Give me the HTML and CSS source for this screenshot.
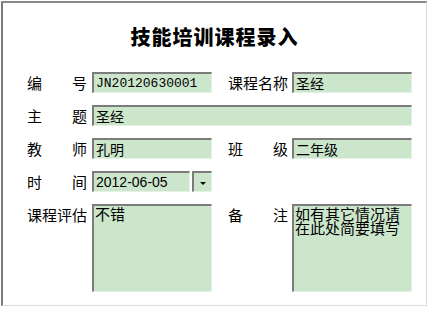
FILE: index.html
```html
<!DOCTYPE html>
<html lang="zh-CN">
<head>
  <meta charset="UTF-8">
  <title>技能培训课程录入</title>
  <link rel="stylesheet" href="styles.css">
</head>
<body>

<div class="frame">
  <h2 class="title">技能培训课程录入</h2>
  <form class="course-form">
    <label class="lbl"><span>编</span><span>号</span></label>
    <div class="cell"><input type="text" class="fld mono" value="JN20120630001"></div>
    <label class="lbl"><span>课</span><span>程</span><span>名</span><span>称</span></label>
    <div class="cell"><input type="text" class="fld" value="圣经"></div>

    <label class="lbl"><span>主</span><span>题</span></label>
    <div class="cell wide"><input type="text" class="fld" value="圣经"></div>

    <label class="lbl"><span>教</span><span>师</span></label>
    <div class="cell"><input type="text" class="fld" value="孔明"></div>
    <label class="lbl"><span>班</span><span>级</span></label>
    <div class="cell"><input type="text" class="fld" value="二年级"></div>

    <label class="lbl"><span>时</span><span>间</span></label>
    <div class="cell date">
      <input type="text" class="fld sans" value="2012-06-05">
      <button type="button" class="drop"><i class="arrow"></i></button>
    </div>
    <div></div>
    <div></div>

    <label class="lbl top"><span>课</span><span>程</span><span>评</span><span>估</span></label>
    <div class="cell"><textarea class="fld area">不错</textarea></div>
    <label class="lbl top"><span>备</span><span>注</span></label>
    <div class="cell"><textarea class="fld area">如有其它情况请在此处简要填写</textarea></div>
  </form>
</div>

</body>
</html>
```

FILE: styles.css
```css
body {
  margin: 0;
  background: #fff;
  font-family: "Noto Sans CJK SC", sans-serif;
  color: #000;
}
.frame {
  box-sizing: border-box;
  width: 426px;
  height: 305px;
  margin: 1px 0 0 1px;
  border-style: solid;
  border-width: 2px 1px 1px 2px;
  border-color: #8a8a8a #dcdcdc #dcdcdc #7a7a7a;
  background: #fff;
}
.title {
  margin: 24px 0 0;
  font-size: 20px;
  line-height: 20px;
  font-weight: 900;
  letter-spacing: 1px;
  text-align: center;
}
.course-form {
  display: grid;
  grid-template-columns: 65px 136px 64px 120px;
  grid-auto-rows: 21px;
  row-gap: 12px;
  margin-top: 25px;
  padding-left: 24px;
}
.lbl {
  display: flex;
  justify-content: space-between;
  align-items: center;
  width: 60px;
  font-size: 15px;
  line-height: 21px;
}
.lbl.top {
  align-items: flex-start;
}
.cell {
  display: flex;
  width: 120px;
}
.cell.wide {
  grid-column: 2 / 5;
  width: 320px;
}
.fld {
  box-sizing: border-box;
  width: 100%;
  height: 21px;
  margin: 0;
  padding: 0 2px;
  border-style: solid;
  border-width: 2px 1px 1px 2px;
  border-color: #7c7c7c #e6f1e6 #e6f1e6 #7c7c7c;
  background: #cce6cc;
  font-family: "Noto Sans CJK SC", sans-serif;
  font-size: 14px;
  line-height: 17px;
  color: #000;
  outline: none;
}
.fld.mono {
  font-family: "Liberation Mono", monospace;
  font-size: 13px;
}
.fld.sans {
  font-family: "Liberation Sans", sans-serif;
  font-size: 14px;
}
.date .fld {
  width: 98px;
}
.drop {
  box-sizing: border-box;
  width: 20px;
  height: 21px;
  margin-left: 2px;
  padding: 0;
  border-style: solid;
  border-width: 2px 1px 1px 2px;
  border-color: #7c7c7c #e6f1e6 #e6f1e6 #7c7c7c;
  background: #cce6cc;
  display: flex;
  align-items: center;
  justify-content: center;
}
.arrow {
  display: block;
  width: 0;
  height: 0;
  margin-top: 2px;
  border-left: 3px solid transparent;
  border-right: 3px solid transparent;
  border-top: 3px solid #000;
}
.course-form .cell:has(.area) {
  grid-row: span 4;
}
.fld.area {
  height: 88px;
  padding: 1px 1px;
  resize: none;
  overflow: hidden;
  font-size: 15px;
  line-height: 14px;
}
```
